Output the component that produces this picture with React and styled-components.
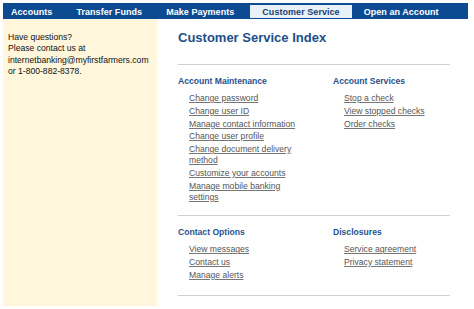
import React from 'react';
import styled, { createGlobalStyle } from 'styled-components';

const GlobalStyle = createGlobalStyle`
  html, body {
    margin: 0;
    padding: 0;
    background: #ffffff;
    font-family: "Liberation Sans", Arial, sans-serif;
  }
`;

// Moldura da página inteira
const Page = styled.div`
  display: flex;
  flex-direction: column;
  height: 309px;
  padding: 3px;
  box-sizing: border-box;
`;

const NavBar = styled.nav`
  display: flex;
  align-items: stretch;
  height: 16px;
  width: 465px;
  padding: 2px 0 1px 0;
  box-sizing: border-box;
  background: #0c4b92;
`;

const NavItem = styled.a`
  display: flex;
  align-items: center;
  padding: 0 12px;
  padding-left: ${(p) => (p.first ? '8px' : '12px')};
  margin-right: ${(p) => p.gap || 0}px;
  font-size: 9px;
  font-weight: bold;
  letter-spacing: 0.05px;
  color: ${(p) => (p.active ? '#1c3f72' : '#ffffff')};
  background: ${(p) => (p.active ? '#e8f0f9' : 'transparent')};
  text-decoration: none;
  white-space: nowrap;
`;

const Body = styled.div`
  display: flex;
  flex: 1;
  min-height: 0;
`;

const Sidebar = styled.aside`
  width: 154px;
  flex-shrink: 0;
  padding: 13px 0 0 5px;
  box-sizing: border-box;
  background: #fff6dc;
  font-size: 8.6px;
  line-height: 11.3px;
  color: #111;
`;

const Main = styled.main`
  flex: 1;
  padding: 11px 0 0 21px;
`;

const Title = styled.h1`
  margin: 0 0 19px 0;
  font-size: 13px;
  line-height: 15px;
  font-weight: bold;
  color: #1d4f8a;
`;

const Section = styled.section`
  display: grid;
  grid-template-columns: 155px 1fr;
  width: 272px;
  padding: 11px 0 ${(p) => p.bottom}px 0;
  border-top: 1px solid #cfcfcf;
  &:last-of-type {
    border-bottom: 1px solid #cfcfcf;
  }
`;

const Heading = styled.h2`
  margin: 0 0 6px 0;
  font-size: 8.6px;
  line-height: 11px;
  font-weight: bold;
  color: #1f5290;
`;

const LinkList = styled.ul`
  list-style: none;
  margin: 0;
  padding: 0 0 0 11px;
  width: 115px;
`;

const LinkItem = styled.li`
  margin-bottom: 1.75px;
  font-size: 8.6px;
  line-height: 11px;
`;

const Link = styled.a`
  color: #555555;
  text-decoration: underline;
  text-decoration-color: #777;
`;

const Column = ({ title, links }) => (
  <div>
    <Heading>{title}</Heading>
    <LinkList>
      {links.map((l) => (
        <LinkItem key={l}>
          <Link href="#">{l}</Link>
        </LinkItem>
      ))}
    </LinkList>
  </div>
);

export default function App() {
  return (
    <>
      <GlobalStyle />
      <Page>
        <NavBar>
          <NavItem first>Accounts</NavItem>
          <NavItem>Transfer Funds</NavItem>
          <NavItem gap={4}>Make Payments</NavItem>
          <NavItem active>Customer Service</NavItem>
          <NavItem>Open an Account</NavItem>
        </NavBar>
        <Body>
          <Sidebar>
            Have questions?
            <br />
            Please contact us at
            <br />
            internetbanking@myfirstfarmers.com
            <br />
            or 1-800-882-8378.
          </Sidebar>
          <Main>
            <Title>Customer Service Index</Title>
            <Section bottom={11}>
              <Column
                title="Account Maintenance"
                links={[
                  'Change password',
                  'Change user ID',
                  'Manage contact information',
                  'Change user profile',
                  'Change document delivery method',
                  'Customize your accounts',
                  'Manage mobile banking settings',
                ]}
              />
              <Column
                title="Account Services"
                links={['Stop a check', 'View stopped checks', 'Order checks']}
              />
            </Section>
            <Section bottom={12}>
              <Column
                title="Contact Options"
                links={['View messages', 'Contact us', 'Manage alerts']}
              />
              <Column
                title="Disclosures"
                links={['Service agreement', 'Privacy statement']}
              />
            </Section>
          </Main>
        </Body>
      </Page>
    </>
  );
}
